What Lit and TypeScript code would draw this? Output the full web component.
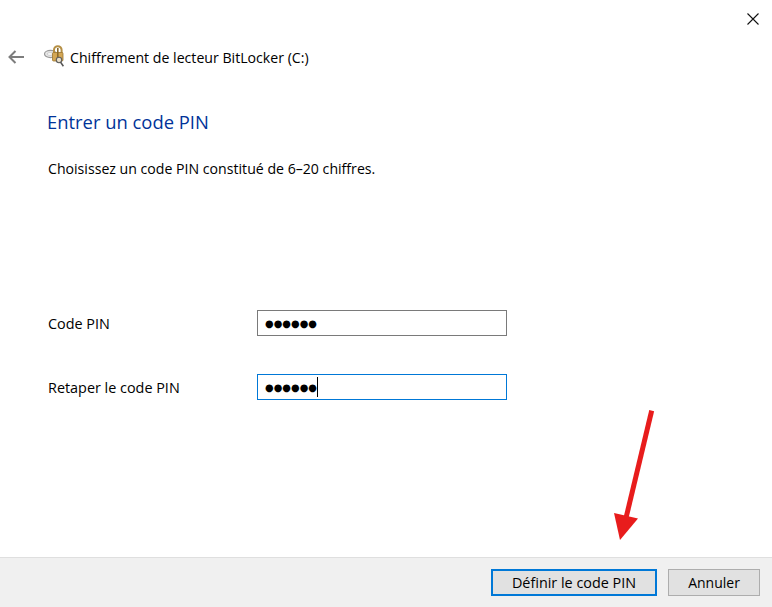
import { LitElement, html, css, svg } from "lit";
import { customElement } from "lit/decorators.js";

const DOTS = "●●●●●●";

@customElement("app-root")
export class AppRoot extends LitElement {
  static styles = css`
    :host {
      display: block;
      position: relative;
      height: 607px;
      overflow: hidden;
      background: #fff;
      color: #000;
      font-family: "Open Sans", "Noto Sans", sans-serif;
      font-size: 14.4px;
    }
    .window {
      display: flex;
      flex-direction: column;
      height: 607px;
    }
    .titlebar {
      display: flex;
      justify-content: flex-end;
      height: 39px;
      padding: 12px 12px 0 0;
      box-sizing: border-box;
    }
    .close {
      display: block;
      width: 14px;
      height: 14px;
    }
    .nav {
      display: flex;
      align-items: center;
      height: 36px;
      padding-left: 8px;
    }
    .back {
      width: 16px;
      height: 14px;
      margin-right: 20px;
    }
    .drive {
      width: 23px;
      height: 24px;
      margin-right: 3px;
      margin-top: -2px;
    }
    .nav-title {
      font-size: 14.15px;
      white-space: nowrap;
    }
    .content {
      flex: 1;
      padding: 32px 0 0 48px;
    }
    h1 {
      margin: 0 0 0 -1px;
      font-size: 18.4px;
      line-height: 30px;
      font-weight: 400;
      color: #003399;
    }
    .hint {
      margin: 22px 0 0;
      line-height: 20px;
      font-size: 14.13px;
    }
    .fields {
      display: grid;
      grid-template-columns: 209px 250px;
      row-gap: 38px;
      margin-top: 131px;
      align-items: center;
    }
    .field {
      box-sizing: border-box;
      height: 26px;
      border: 1px solid #7a7a7a;
      padding-left: 7px;
      display: flex;
      align-items: center;
      font-family: "DejaVu Sans", sans-serif;
      font-size: 9.9px;
      letter-spacing: 0.05px;
    }
    .field.focus {
      border-color: #0078d7;
    }
    .caret {
      width: 1px;
      height: 20px;
      background: #000;
    }
    .footer {
      box-sizing: border-box;
      height: 50px;
      border-top: 1px solid #dfdfdf;
      background: #f0f0f0;
      display: flex;
      justify-content: flex-end;
      gap: 11px;
      padding: 11px 12px 0 0;
    }
    button {
      box-sizing: border-box;
      height: 27px;
      padding: 0;
      background: #e1e1e1;
      border: 1px solid #adadad;
      color: #000;
      font: inherit;
    }
    .primary {
      width: 166px;
      border: 2px solid #0078d7;
    }
    .secondary {
      width: 92px;
      font-size: 14px;
    }
    .arrow {
      position: absolute;
      left: 600px;
      top: 400px;
      width: 70px;
      height: 150px;
    }
  `;

  private driveIcon() {
    return svg`
      <ellipse cx="6.500" cy="10" rx="6" ry="3.600" fill="#e8e8e8" stroke="#9a9a9a" stroke-width="1.200" />
      <ellipse cx="6" cy="10" rx="3" ry="1.300" fill="#fff" stroke="#bdbdbd" stroke-width=".7" />
      <path d="M10 9V6a3.800 3.800 0 0 1 7.600 0V9" fill="none" stroke="#b58f45" stroke-width="2" />
      <rect x="8.500" y="8.500" width="10.500" height="8.500" rx="1" fill="#d3a654" stroke="#9c7630" stroke-width=".8" />
      <rect x="13" y="4" width="1.600" height="9" fill="#8a6a2a" />
      <circle cx="15" cy="16" r="2.700" fill="#e9dfc8" stroke="#5f5f5f" stroke-width="1.100" />
      <path d="M16.600 18.200l2.800 4" stroke="#555" stroke-width="1.500" />
    `;
  }

  render() {
    return html`
      <div class="window">
        <div class="titlebar">
          <svg class="close" viewBox="0 0 14 14">
            <path d="M1.500 1.500l11 11M12.500 1.500l-11 11" stroke="#111" stroke-width="1.100" fill="none" />
          </svg>
        </div>
        <div class="nav">
          <svg class="back" viewBox="0 0 16 14">
            <path d="M1 7h15M7.500 1L1.500 7l6 6" stroke="#7d7d7d" stroke-width="2" fill="none" />
          </svg>
          <svg class="drive" viewBox="0 0 23 24">${this.driveIcon()}</svg>
          <span class="nav-title">Chiffrement de lecteur BitLocker (C:)</span>
        </div>
        <div class="content">
          <h1>Entrer un code PIN</h1>
          <p class="hint">Choisissez un code PIN constitué de 6–20 chiffres.</p>
          <div class="fields">
            <span>Code PIN</span>
            <div class="field">${DOTS}</div>
            <span>Retaper le code PIN</span>
            <div class="field focus">${DOTS}<span class="caret"></span></div>
          </div>
        </div>
        <div class="footer">
          <button class="primary">Définir le code PIN</button>
          <button class="secondary">Annuler</button>
        </div>
      </div>
      <svg class="arrow" viewBox="0 0 70 150">
        <path d="M51.700 10.700L26 118" stroke="#e81c1c" stroke-width="5" fill="none" />
        <path d="M14 113L38 118.500L20 140Z" fill="#e81c1c" />
      </svg>
    `;
  }
}
